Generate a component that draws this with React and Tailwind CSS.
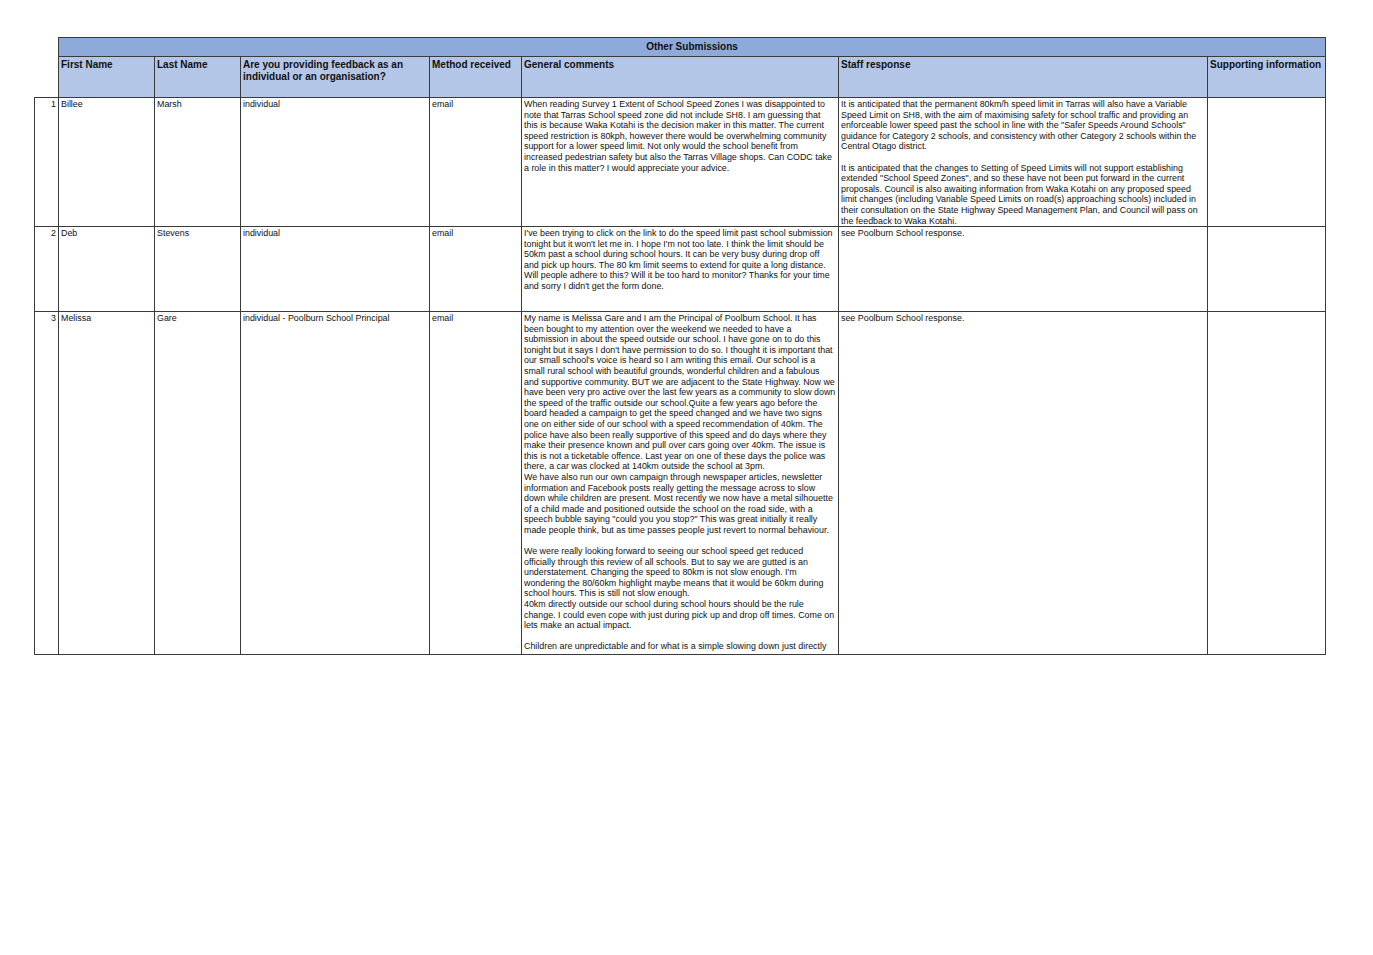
export default function App() {
  const c = "border border-[#3a3a3a] align-top px-[2px] pt-[1px] overflow-hidden";
  const h = "border border-[#3a3a3a] align-top px-[2px] pt-[2px] font-bold bg-[#b4c6e7] text-[10px] leading-[12px]";
  const rows = [
    { n: 1, h: 129, f: "Billee", l: "Marsh", t: "individual", m: "email",
      g: ["When reading Survey 1 Extent of School Speed Zones I was disappointed to note that Tarras School speed zone did not include SH8. I am guessing that this is because Waka Kotahi is the decision maker in this matter. The current speed restriction is 80kph, however there would be overwhelming community support for a lower speed limit. Not only would the school benefit from increased pedestrian safety but also the Tarras Village shops. Can CODC take a role in this matter? I would appreciate your advice."],
      s: ["It is anticipated that the permanent 80km/h speed limit in Tarras will also have a Variable Speed Limit on SH8, with the aim of maximising safety for school traffic and providing an enforceable lower speed past the school in line with the \"Safer Speeds Around Schools\" guidance for Category 2 schools, and consistency with other Category 2 schools within the Central Otago district.", "", "It is anticipated that the changes to Setting of Speed Limits will not support establishing extended \"School Speed Zones\", and so these have not been put forward in the current proposals. Council is also awaiting information from Waka Kotahi on any proposed speed limit changes (including Variable Speed Limits on road(s) approaching schools) included in their consultation on the State Highway Speed Management Plan, and Council will pass on the feedback to Waka Kotahi."] },
    { n: 2, h: 85, f: "Deb", l: "Stevens", t: "individual", m: "email",
      g: ["I've been trying to click on the link to do the speed limit past school submission tonight but it won't let me in. I hope I'm not too late. I think the limit should be 50km past a school during school hours. It can be very busy during drop off and pick up hours. The 80 km limit seems to extend for quite a long distance. Will people adhere to this? Will it be too hard to monitor? Thanks for your time and sorry I didn't get the form done."],
      s: ["see Poolburn School response."] },
    { n: 3, h: 343, f: "Melissa", l: "Gare", t: "individual - Poolburn School Principal", m: "email",
      g: ["My name is Melissa Gare and I am the Principal of Poolburn School. It has been bought to my attention over the weekend we needed to have a submission in about the speed outside our school. I have gone on to do this tonight but it says I don't have permission to do so. I thought it is important that our small school's voice is heard so I am writing this email. Our school is a small rural school with beautiful grounds, wonderful children and a fabulous and supportive community. BUT we are adjacent to the State Highway. Now we have been very pro active over the last few years as a community to slow down the speed of the traffic outside our school.Quite a few years ago before  the board headed a campaign to get the speed changed and we have two signs one on either side of our school with a speed recommendation of 40km. The police have also been really supportive of this speed and do days where they make their presence known and pull over cars going over 40km. The issue is this is not a ticketable offence. Last year on one of these days the police was there, a car was clocked at 140km outside the school at 3pm.", "We have also run our own campaign through newspaper articles, newsletter information and Facebook posts really getting the message across to slow down while children are present. Most recently we now have  a metal silhouette of a child made and positioned outside the school on the road side, with a speech bubble saying \"could you you stop?\"  This was great initially it really made people think, but as time passes people just revert to normal behaviour.", "", "We were really looking forward to seeing our school speed get reduced officially through this review of all schools. But to say we are gutted is an understatement. Changing the speed to 80km is not slow enough. I'm wondering the 80/60km highlight maybe means that it would be 60km during school hours. This is still not slow enough.", "40km directly outside our school during school hours should be the rule change. I could even cope with just during pick up and drop off times. Come on lets make an actual impact.", "", "Children are unpredictable and for what is a simple slowing down  just directly"],
      s: ["see Poolburn School response."] },
  ];
  const para = (arr) => arr.map((p, i) => p === "" ? <div key={i} className="h-[10.6px]" /> : <div key={i}>{p}</div>);
  return (
    <div className="w-[1373px] h-[955px] bg-white pt-[37px] pl-[34px]" style={{ fontFamily: '"Liberation Sans", Arial, sans-serif' }}>
      <table className="table-fixed border-collapse text-[8.9px] leading-[10.6px] text-[#111]">
        <colgroup>
          <col className="w-[24px]" /><col className="w-[96px]" /><col className="w-[86px]" /><col className="w-[189px]" /><col className="w-[92px]" /><col className="w-[317px]" /><col className="w-[369px]" /><col className="w-[118px]" />
        </colgroup>
        <tbody>
          <tr className="h-[19px]">
            <td></td>
            <td colSpan={7} className="border border-[#3a3a3a] bg-[#8eaadb] text-center font-bold text-[10px] align-middle">Other Submissions</td>
          </tr>
          <tr className="h-[41px]">
            <td></td>
            <td className={h}>First Name</td>
            <td className={h}>Last Name</td>
            <td className={h}>Are you providing feedback as an individual or an organisation?</td>
            <td className={h}>Method received</td>
            <td className={h}>General comments</td>
            <td className={h}>Staff response</td>
            <td className={h}>Supporting information</td>
          </tr>
          {rows.map((r) => (
            <tr key={r.n} style={{ height: r.h }}>
              <td className={c + " text-right"}>{r.n}</td>
              <td className={c}>{r.f}</td>
              <td className={c}>{r.l}</td>
              <td className={c}>{r.t}</td>
              <td className={c}>{r.m}</td>
              <td className={c}><div className="overflow-hidden" style={{ maxHeight: r.h - 2 }}>{para(r.g)}</div></td>
              <td className={c}><div className="overflow-hidden" style={{ maxHeight: r.h - 2 }}>{para(r.s)}</div></td>
              <td className={c}></td>
            </tr>
          ))}
        </tbody>
      </table>
    </div>
  );
}
